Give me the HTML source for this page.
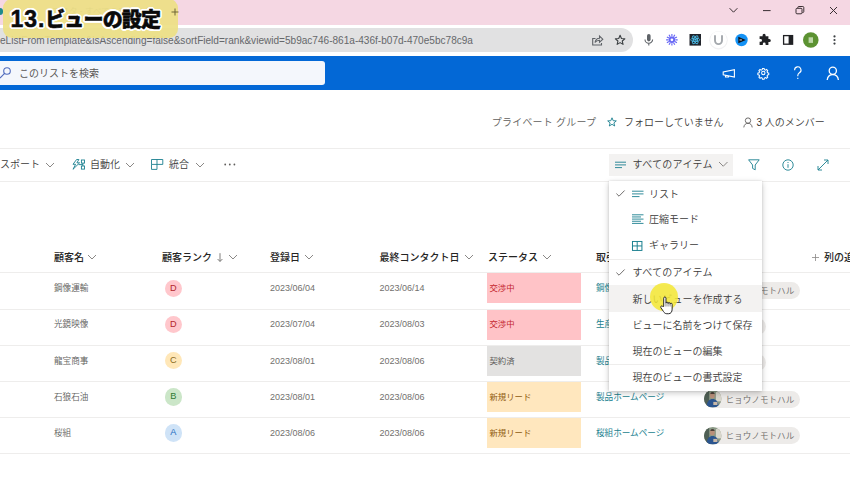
<!DOCTYPE html>
<html lang="ja">
<head>
<meta charset="utf-8">
<title>13.ビューの設定</title>
<style>
*{box-sizing:border-box;margin:0;padding:0}
html,body{width:850px;height:478px;overflow:hidden;background:#fff}
body{font-family:"Liberation Sans","Noto Sans CJK JP",sans-serif;position:relative;color:#323130}
.abs{position:absolute}
.t{position:absolute;white-space:nowrap;line-height:16px;height:16px}
svg{position:absolute;overflow:visible}
#tabstrip{left:0;top:0;width:850px;height:24.6px;background:#f5d7e3}
#url{left:-20px;top:28px;width:653px;height:24px;border-radius:12px;background:#e1e1e2}
#bluebar{left:0;top:55.5px;width:850px;height:34.5px;background:#0368d6}
#search{left:-5px;top:61px;width:330px;height:24px;border-radius:3px;background:#f4f7fc}
.hl{position:absolute;height:1px;background:#eeedec}
.hd{font-size:10px;font-weight:500;color:#252423}
.bd{font-size:8.6px;color:#605e5c;font-weight:350}
.dt{font-size:9px;color:#72706e}
.lk{font-size:8.6px;color:#1a7f8f}
.st{position:absolute;left:487px;width:94px;height:30px}
.stt{font-size:8.4px}
.rk{position:absolute;width:17.6px;height:17.6px;border-radius:50%;font-size:9.2px;text-align:center;line-height:17.6px}
.pill{position:absolute;height:17px;border-radius:8.5px;background:#edebe9}
.pt{font-size:8.6px;color:#6b6967;font-weight:350}
.mi{font-size:10px;color:#3b3a39;font-weight:350}
</style>
</head>
<body>
<div id="tabstrip" class="abs"></div>
<div id="url" class="abs"></div>
<div class="t " style="left:0px;top:32.6px;font-size:10.07px;color:#66686b;">eListFromTemplate&amp;isAscending=false&amp;sortField=rank&amp;viewid=5b9ac746-861a-436f-b07d-470e5bc78c9a</div>
<div id="bluebar" class="abs"></div>
<div id="search" class="abs"></div>
<div class="t " style="left:19px;top:66.1px;font-size:10px;color:#5a5856">このリストを検索</div>
<svg style="left:0;top:66px" width="12" height="14" viewBox="0 0 12 14"><circle cx="7" cy="5" r="3.3" fill="none" stroke="#4f6bbd" stroke-width="1.1"/><path d="M4.6 7.4 L0 12" stroke="#4f6bbd" stroke-width="1.1"/></svg>
<svg style="left:0;top:0" width="850" height="25" viewBox="0 0 850 25" fill="none" stroke="#3a2f33" stroke-width="1"><path d="M729.6 8.2 L733.5 12.2 L737.4 8.2"/><path d="M763 10.6 H770.6"/><rect x="796" y="8.3" width="6" height="5.5" rx="1"/><path d="M797.8 8 V7.5 a1 1 0 0 1 1 -1 H802.8 a1 1 0 0 1 1 1 V11.5 a1 1 0 0 1 -1 1 H802.3"/><path d="M830 7 L837 14 M837 7 L830 14"/></svg>
<svg style="left:0;top:25px" width="850" height="30" viewBox="0 25 850 30">
<g fill="none" stroke="#5f6368" stroke-width="1.1">
<path d="M595.5 38.5 H592.7 V45 H601.5 V43"/><path d="M595 42.5 C595.5 39.5 597.5 38.2 599.5 38.2 V36 L602.8 39.2 L599.5 42.3 V40.2 C597.5 40.2 596 41 595 42.5 Z"/>
<path d="M620.10 35.30 L621.45 38.44 L624.86 38.75 L622.29 41.01 L623.04 44.35 L620.10 42.60 L617.16 44.35 L617.91 41.01 L615.34 38.75 L618.75 38.44 Z" stroke="#3c4043" stroke-width="1.1" stroke-linejoin="round"/>
</g>
<g>
<rect x="647" y="34" width="3.6" height="7.4" rx="1.8" fill="#5f6368"/><path d="M645 39.5 a3.8 3.8 0 0 0 7.6 0 M648.8 43.3 V45.6" fill="none" stroke="#5f6368" stroke-width="1.1"/>
</g>
<g stroke="#6868f5" fill="none"><circle cx="671.9" cy="39.8" r="2.3" stroke-width="1.9"/><path d="M675.30 39.80 L677.70 39.80 M674.84 41.50 L676.92 42.70 M673.60 42.74 L674.80 44.82 M671.90 43.20 L671.90 45.60 M670.20 42.74 L669.00 44.82 M668.96 41.50 L666.88 42.70 M668.50 39.80 L666.10 39.80 M668.96 38.10 L666.88 36.90 M670.20 36.86 L669.00 34.78 M671.90 36.40 L671.90 34.00 M673.60 36.86 L674.80 34.78 M674.84 38.10 L676.92 36.90" stroke-width="1.15"/></g>
<rect x="689.5" y="34" width="11.5" height="11.6" fill="#20232a"/>
<g fill="none" stroke="#4cc3f0" stroke-width="0.8"><ellipse cx="695.2" cy="39.8" rx="4.6" ry="1.8"/><ellipse cx="695.2" cy="39.8" rx="4.6" ry="1.8" transform="rotate(60 695.2 39.8)"/><ellipse cx="695.2" cy="39.8" rx="4.6" ry="1.8" transform="rotate(120 695.2 39.8)"/></g><circle cx="695.2" cy="39.8" r="1" fill="#4cc3f0"/>
<circle cx="718.5" cy="40.2" r="9.2" fill="#f1f1f3"/><circle cx="718.5" cy="39.8" r="8.4" fill="#fff"/>
<path d="M715 35.2 V40.6 a3.5 3.5 0 0 0 7 0 V35.2" fill="none" stroke="#a4a8ad" stroke-width="1.9"/>
<circle cx="741.5" cy="40" r="6.2" fill="#1492f5"/><path d="M738.3 36.8 L745.8 40 L738.3 43.2 Z" fill="#10131a"/><rect x="739.5" y="39" width="2.4" height="1.8" fill="#7b8794"/>
<path d="M762.6 35.2 a1.5 1.5 0 0 1 3 0 V36.3 H768.4 V39 H769.3 a1.5 1.5 0 0 1 0 3 H768.4 V45 H765.6 V44 a1.4 1.4 0 0 0 -2.8 0 V45 H759.6 V41.8 H760.6 a1.4 1.4 0 0 0 0 -2.8 H759.6 V36.3 H762.6 Z" fill="#202124"/>
<rect x="783.6" y="35.6" width="9" height="8.6" fill="none" stroke="#202124" stroke-width="1.3"/><rect x="788.6" y="35.6" width="4" height="8.6" fill="#202124"/>
<circle cx="810.8" cy="40" r="7.8" fill="#5c9232"/>
<rect x="808.6" y="37.3" width="4.4" height="5.6" fill="#cfe3bd" opacity="0.85"/>
<circle cx="834.5" cy="36.4" r="1.1" fill="#3c4043"/><circle cx="834.5" cy="40" r="1.1" fill="#3c4043"/><circle cx="834.5" cy="43.6" r="1.1" fill="#3c4043"/>
</svg>
<svg style="left:0;top:55px" width="850" height="35" viewBox="0 55 850 35" fill="none" stroke="#fff" stroke-width="1.1">
<path d="M723.2 72 V74.8 L734.4 77 V69.6 Z"/><path d="M725.5 75.3 V77 H728.5 V75.9"/>
<g transform="translate(763.3 73) scale(0.8) translate(-763.3 -73)" stroke-width="1.3"><circle cx="763.3" cy="73" r="2.1"/>
<path d="M762.3 67.3 h2 l0.4 1.5 l1.3 0.6 l1.4 -0.8 l1.4 1.4 l-0.8 1.4 l0.6 1.3 l1.5 0.4 v2 l-1.5 0.4 l-0.6 1.3 l0.8 1.4 l-1.4 1.4 l-1.4 -0.8 l-1.3 0.6 l-0.4 1.5 h-2 l-0.4 -1.5 l-1.3 -0.6 l-1.4 0.8 l-1.4 -1.4 l0.8 -1.4 l-0.6 -1.3 l-1.5 -0.4 v-2 l1.5 -0.4 l0.6 -1.3 l-0.8 -1.4 l1.4 -1.4 l1.4 0.8 l1.3 -0.6 z"/></g>
<path d="M794.6 70.2 a3.2 3.2 0 1 1 4.8 2.6 c-1.2 0.8 -1.6 1.4 -1.6 2.8 v0.6"/><path d="M797.8 77.8 v1.2"/>
<circle cx="832.8" cy="70.8" r="3.6" stroke-width="1.3"/><path d="M827.2 80 c0.4 -3.6 2.8 -5.4 5.6 -5.4 s5.2 1.8 5.6 5.4" stroke-width="1.3"/>
</svg>
<div class="t " style="left:491.8px;top:115.2px;font-size:10px;color:#605e5c;font-weight:350;letter-spacing:0.2px">プライベート グループ</div>
<svg style="left:607px;top:117px" width="10" height="10" viewBox="0 0 10 10"><path d="M5 0.8 L6.2 3.7 L9.3 3.9 L6.9 5.9 L7.7 9 L5 7.3 L2.3 9 L3.1 5.9 L0.7 3.9 L3.8 3.7 Z" fill="none" stroke="#1a7f8f" stroke-width="0.9"/></svg>
<div class="t " style="left:624px;top:115.2px;font-size:10px;color:#3b3a39;font-weight:350">フォローしていません</div>
<svg style="left:743px;top:117px" width="10" height="11" viewBox="0 0 10 11" fill="none" stroke="#605e5c" stroke-width="0.9"><circle cx="5" cy="3.6" r="2.7"/><path d="M0.8 10.4 c0.3 -2.8 2 -4.1 4.2 -4.1 s3.9 1.3 4.2 4.1"/></svg>
<div class="t " style="left:756.5px;top:115.2px;font-size:10px;color:#3b3a39;font-weight:350">3 人のメンバー</div>
<div class="hl" style="left:0;top:148px;width:850px"></div>
<div class="hl" style="left:0;top:181px;width:850px"></div>
<div class="t mi" style="left:0px;top:157.1px;">スポート</div>
<svg style="left:46px;top:162.5px" width="8" height="4.0" viewBox="0 0 8 4.0"><path d="M0 0 L4.0 4.0 L8 0" fill="none" stroke="#8a8886" stroke-width="1"/></svg>
<svg style="left:71.5px;top:158.6px" width="13" height="11" viewBox="0 0 13 11" fill="none" stroke="#1a7f8f" stroke-width="0.9">
<path d="M4.6 0.5 L1 5.3 H3.6 L1 10.3 L7.6 3.8 H4.9 L6.9 0.5 Z"/><rect x="9.4" y="1" width="3.1" height="3.1"/><rect x="9.4" y="7" width="3.1" height="3.1"/><path d="M6.6 5.6 H10.9 M10.9 4.1 V7"/></svg>
<div class="t mi" style="left:90px;top:157.1px;">自動化</div>
<svg style="left:126px;top:162.5px" width="8" height="4.0" viewBox="0 0 8 4.0"><path d="M0 0 L4.0 4.0 L8 0" fill="none" stroke="#8a8886" stroke-width="1"/></svg>
<svg style="left:151px;top:158.8px" width="12.4" height="11" viewBox="0 0 12.4 11" fill="none" stroke="#1a7f8f" stroke-width="0.9">
<path d="M0.5 0.5 H11.8 V5.4 H0.5 Z M6 0.5 V10.4 M0.5 5.4 V10.4 H6"/></svg>
<div class="t mi" style="left:169px;top:157.1px;">統合</div>
<svg style="left:195.5px;top:162.5px" width="8" height="4.0" viewBox="0 0 8 4.0"><path d="M0 0 L4.0 4.0 L8 0" fill="none" stroke="#8a8886" stroke-width="1"/></svg>
<svg style="left:224px;top:163px" width="12" height="3" viewBox="0 0 12 3" fill="#605e5c"><circle cx="1.2" cy="1.5" r="0.9"/><circle cx="5.8" cy="1.5" r="0.9"/><circle cx="10.4" cy="1.5" r="0.9"/></svg>
<div class="abs" style="left:609px;top:154px;width:124px;height:21.5px;background:#f3f2f1"></div>
<svg style="left:615px;top:160.5px" width="12" height="8" viewBox="0 0 12 8" stroke="#1a7f8f" stroke-width="0.9"><path d="M0 1.2 H11 M0 3.9 H11 M0 6.6 H7"/></svg>
<div class="t mi" style="left:632.6px;top:157.1px;letter-spacing:0.28px">すべてのアイテム</div>
<svg style="left:718.5px;top:162.375px" width="8.5" height="4.25" viewBox="0 0 8.5 4.25"><path d="M0 0 L4.25 4.25 L8.5 0" fill="none" stroke="#8a8886" stroke-width="1"/></svg>
<svg style="left:748px;top:159px" width="12" height="12" viewBox="0 0 12 12" fill="none" stroke="#1a7f8f" stroke-width="0.9"><path d="M0.6 0.8 H11.2 L7.2 6 V10.8 L4.6 9.4 V6 Z"/></svg>
<svg style="left:782px;top:158.5px" width="12" height="12" viewBox="0 0 12 12" fill="none" stroke="#1a7f8f" stroke-width="0.9"><circle cx="6" cy="6" r="5.2"/><path d="M6 5.2 V8.8 M6 3 V4"/></svg>
<svg style="left:817px;top:158.5px" width="12" height="12" viewBox="0 0 12 12" fill="none" stroke="#1a7f8f" stroke-width="0.9"><path d="M1 11 L11 1 M7 1 H11 V5 M1 7 V11 H5"/></svg>
<div class="t hd" style="left:54px;top:249.6px;">顧客名</div>
<svg style="left:88px;top:255.0px" width="8" height="4.0" viewBox="0 0 8 4.0"><path d="M0 0 L4.0 4.0 L8 0" fill="none" stroke="#8a8886" stroke-width="1"/></svg>
<div class="t hd" style="left:162px;top:249.6px;">顧客ランク</div>
<svg style="left:217px;top:253px" width="6" height="9" viewBox="0 0 6 9"><path d="M3 0.2 V8.3 M0.6 6 L3 8.5 L5.4 6" fill="none" stroke="#605e5c" stroke-width="0.8"/></svg>
<svg style="left:228.7px;top:255.0px" width="8" height="4.0" viewBox="0 0 8 4.0"><path d="M0 0 L4.0 4.0 L8 0" fill="none" stroke="#8a8886" stroke-width="1"/></svg>
<div class="t hd" style="left:270px;top:249.6px;">登録日</div>
<svg style="left:305px;top:255.0px" width="8" height="4.0" viewBox="0 0 8 4.0"><path d="M0 0 L4.0 4.0 L8 0" fill="none" stroke="#8a8886" stroke-width="1"/></svg>
<div class="t hd" style="left:379.5px;top:249.6px;">最終コンタクト日</div>
<svg style="left:464.8px;top:255.0px" width="8" height="4.0" viewBox="0 0 8 4.0"><path d="M0 0 L4.0 4.0 L8 0" fill="none" stroke="#8a8886" stroke-width="1"/></svg>
<div class="t hd" style="left:488px;top:249.6px;">ステータス</div>
<svg style="left:542.8px;top:255.0px" width="8" height="4.0" viewBox="0 0 8 4.0"><path d="M0 0 L4.0 4.0 L8 0" fill="none" stroke="#8a8886" stroke-width="1"/></svg>
<div class="t hd" style="left:596px;top:249.6px;">取引</div>
<svg style="left:812px;top:253.5px" width="7" height="7" viewBox="0 0 7 7"><path d="M3.5 0 V7 M0 3.5 H7" stroke="#8a8886" stroke-width="0.8" fill="none"/></svg>
<div class="t hd" style="left:824px;top:249.6px;">列の追加</div>
<div class="hl" style="left:0;top:272.3px;width:850px"></div>
<div class="t bd" style="left:54px;top:280.2px;">鋼像運輸</div>
<div class="rk" style="left:164.6px;top:279.5px;background:#ffc7cc;color:#b3262d">D</div>
<div class="t dt" style="left:270px;top:280.2px;">2023/06/04</div>
<div class="t dt" style="left:379.5px;top:280.2px;">2023/06/14</div>
<div class="st" style="top:273.3px;background:#ffc3c7"></div>
<div class="t stt" style="left:489.5px;top:280.2px;color:#c4262e">交渉中</div>
<div class="t lk" style="left:596px;top:280.2px;">鋼像</div>
<div class="pill" style="left:703.5px;top:282.1px;width:96.5px"></div>
<svg style="left:703.5px;top:281.9px" width="17.6" height="17.6" viewBox="0 0 17 17"><defs><clipPath id="c0"><circle cx="8.5" cy="8.5" r="8.5"/></clipPath></defs><g clip-path="url(#c0)"><rect width="17" height="17" fill="#8b9a86"/><rect x="0" y="0" width="5" height="17" fill="#4f5f55"/><rect x="11.5" y="2" width="5.5" height="9" fill="#d9d6cc"/><ellipse cx="8" cy="5.2" rx="2.4" ry="2.8" fill="#b98f7a"/><path d="M6 3.6 a2.4 2.4 0 0 1 4.4 0 Z" fill="#2a2422"/><path d="M2.5 17 C2.5 10.5 5.5 8.6 8.3 8.6 S14 10.5 14.5 17 Z" fill="#2b558f"/><rect x="9" y="11.5" width="4" height="3" fill="#c9b9a8"/></g></svg>
<div class="t pt" style="left:725.5px;top:283.2px;">ヒョウノモトハル</div>
<div class="hl" style="left:0;top:308.5px;width:850px"></div>
<div class="t bd" style="left:54px;top:316.4px;">光鏡映像</div>
<div class="rk" style="left:164.6px;top:315.7px;background:#ffc7cc;color:#b3262d">D</div>
<div class="t dt" style="left:270px;top:316.4px;">2023/07/04</div>
<div class="t dt" style="left:379.5px;top:316.4px;">2023/08/03</div>
<div class="st" style="top:309.5px;background:#ffc3c7"></div>
<div class="t stt" style="left:489.5px;top:316.4px;color:#c4262e">交渉中</div>
<div class="t lk" style="left:596px;top:316.4px;">生産</div>
<div class="pill" style="left:703.5px;top:318.3px;width:62px"></div>
<svg style="left:703.5px;top:318.1px" width="17.6" height="17.6" viewBox="0 0 17 17"><defs><clipPath id="c1"><circle cx="8.5" cy="8.5" r="8.5"/></clipPath></defs><g clip-path="url(#c1)"><rect width="17" height="17" fill="#8b9a86"/><rect x="0" y="0" width="5" height="17" fill="#4f5f55"/><rect x="11.5" y="2" width="5.5" height="9" fill="#d9d6cc"/><ellipse cx="8" cy="5.2" rx="2.4" ry="2.8" fill="#b98f7a"/><path d="M6 3.6 a2.4 2.4 0 0 1 4.4 0 Z" fill="#2a2422"/><path d="M2.5 17 C2.5 10.5 5.5 8.6 8.3 8.6 S14 10.5 14.5 17 Z" fill="#2b558f"/><rect x="9" y="11.5" width="4" height="3" fill="#c9b9a8"/></g></svg>
<div class="hl" style="left:0;top:344.6px;width:850px"></div>
<div class="t bd" style="left:54px;top:352.5px;">龍宝商事</div>
<div class="rk" style="left:164.6px;top:351.8px;background:#ffe7b8;color:#8a6a1c">C</div>
<div class="t dt" style="left:270px;top:352.5px;">2023/08/01</div>
<div class="t dt" style="left:379.5px;top:352.5px;">2023/08/06</div>
<div class="st" style="top:345.6px;background:#e3e2e1"></div>
<div class="t stt" style="left:489.5px;top:352.5px;color:#605e5c">契約済</div>
<div class="t lk" style="left:596px;top:352.5px;">製品</div>
<div class="pill" style="left:703.5px;top:354.4px;width:62px"></div>
<svg style="left:703.5px;top:354.2px" width="17.6" height="17.6" viewBox="0 0 17 17"><defs><clipPath id="c2"><circle cx="8.5" cy="8.5" r="8.5"/></clipPath></defs><g clip-path="url(#c2)"><rect width="17" height="17" fill="#8b9a86"/><rect x="0" y="0" width="5" height="17" fill="#4f5f55"/><rect x="11.5" y="2" width="5.5" height="9" fill="#d9d6cc"/><ellipse cx="8" cy="5.2" rx="2.4" ry="2.8" fill="#b98f7a"/><path d="M6 3.6 a2.4 2.4 0 0 1 4.4 0 Z" fill="#2a2422"/><path d="M2.5 17 C2.5 10.5 5.5 8.6 8.3 8.6 S14 10.5 14.5 17 Z" fill="#2b558f"/><rect x="9" y="11.5" width="4" height="3" fill="#c9b9a8"/></g></svg>
<div class="hl" style="left:0;top:380.8px;width:850px"></div>
<div class="t bd" style="left:54px;top:388.7px;">石狼石油</div>
<div class="rk" style="left:164.6px;top:388.0px;background:#cbe6c8;color:#2f7a33">B</div>
<div class="t dt" style="left:270px;top:388.7px;">2023/08/01</div>
<div class="t dt" style="left:379.5px;top:388.7px;">2023/08/06</div>
<div class="st" style="top:381.8px;background:#ffe7be"></div>
<div class="t stt" style="left:489.5px;top:388.7px;color:#8f5a0e">新規リード</div>
<div class="t lk" style="left:596px;top:388.7px;">製品ホームページ</div>
<div class="pill" style="left:703.5px;top:390.6px;width:96.5px"></div>
<svg style="left:703.5px;top:390.4px" width="17.6" height="17.6" viewBox="0 0 17 17"><defs><clipPath id="c3"><circle cx="8.5" cy="8.5" r="8.5"/></clipPath></defs><g clip-path="url(#c3)"><rect width="17" height="17" fill="#8b9a86"/><rect x="0" y="0" width="5" height="17" fill="#4f5f55"/><rect x="11.5" y="2" width="5.5" height="9" fill="#d9d6cc"/><ellipse cx="8" cy="5.2" rx="2.4" ry="2.8" fill="#b98f7a"/><path d="M6 3.6 a2.4 2.4 0 0 1 4.4 0 Z" fill="#2a2422"/><path d="M2.5 17 C2.5 10.5 5.5 8.6 8.3 8.6 S14 10.5 14.5 17 Z" fill="#2b558f"/><rect x="9" y="11.5" width="4" height="3" fill="#c9b9a8"/></g></svg>
<div class="t pt" style="left:725.5px;top:391.7px;">ヒョウノモトハル</div>
<div class="hl" style="left:0;top:416.9px;width:850px"></div>
<div class="t bd" style="left:54px;top:424.8px;">桜組</div>
<div class="rk" style="left:164.6px;top:424.1px;background:#cfe3f7;color:#1f6fc0">A</div>
<div class="t dt" style="left:270px;top:424.8px;">2023/08/06</div>
<div class="t dt" style="left:379.5px;top:424.8px;">2023/08/06</div>
<div class="st" style="top:417.9px;background:#ffe7be"></div>
<div class="t stt" style="left:489.5px;top:424.8px;color:#8f5a0e">新規リード</div>
<div class="t lk" style="left:596px;top:424.8px;">桜組ホームページ</div>
<div class="pill" style="left:703.5px;top:426.7px;width:96.5px"></div>
<svg style="left:703.5px;top:426.5px" width="17.6" height="17.6" viewBox="0 0 17 17"><defs><clipPath id="c4"><circle cx="8.5" cy="8.5" r="8.5"/></clipPath></defs><g clip-path="url(#c4)"><rect width="17" height="17" fill="#8b9a86"/><rect x="0" y="0" width="5" height="17" fill="#4f5f55"/><rect x="11.5" y="2" width="5.5" height="9" fill="#d9d6cc"/><ellipse cx="8" cy="5.2" rx="2.4" ry="2.8" fill="#b98f7a"/><path d="M6 3.6 a2.4 2.4 0 0 1 4.4 0 Z" fill="#2a2422"/><path d="M2.5 17 C2.5 10.5 5.5 8.6 8.3 8.6 S14 10.5 14.5 17 Z" fill="#2b558f"/><rect x="9" y="11.5" width="4" height="3" fill="#c9b9a8"/></g></svg>
<div class="t pt" style="left:725.5px;top:427.8px;">ヒョウノモトハル</div>
<div class="hl" style="left:0;top:453.1px;width:850px"></div>
<div class="abs" style="left:609px;top:181px;width:153px;height:209.5px;background:#fff;box-shadow:0 2px 6px rgba(0,0,0,.22),0 0 2px rgba(0,0,0,.12)"></div>
<div class="abs" style="left:609px;top:284.8px;width:153px;height:27px;background:#f3f2f1"></div>
<div class="hl" style="left:609px;top:259px;width:153px"></div>
<div class="hl" style="left:609px;top:364px;width:153px"></div>
<svg style="left:615.5px;top:190.0px" width="9" height="7" viewBox="0 0 9 7"><path d="M0.4 3.6 L3 6.2 L8.6 0.5" fill="none" stroke="#605e5c" stroke-width="0.9"/></svg>
<svg style="left:631.5px;top:190px" width="12" height="8" viewBox="0 0 12 8" stroke="#1a7f8f" stroke-width="0.9"><path d="M0 1.2 H11.5 M0 3.9 H11.5 M0 6.6 H7.5"/></svg>
<div class="t mi" style="left:649px;top:186.6px;">リスト</div>
<svg style="left:631.5px;top:214.3px" width="12" height="11" viewBox="0 0 12 11" stroke="#1a7f8f" stroke-width="0.9"><path d="M0 0.8 H11.5 M0 2.95 H9 M0 5.1 H11.5 M0 7.25 H9 M0 9.4 H11.5"/></svg>
<div class="t mi" style="left:649px;top:212.1px;">圧縮モード</div>
<svg style="left:631.8px;top:240.6px" width="10.4" height="9.9" viewBox="0 0 11 11" preserveAspectRatio="none" fill="none" stroke="#1a7f8f" stroke-width="1.05"><rect x="0.5" y="0.5" width="10" height="10"/><path d="M5.5 0.5 V10.5 M0.5 5.5 H10.5"/></svg>
<div class="t mi" style="left:649px;top:238.1px;">ギャラリー</div>
<svg style="left:615.5px;top:268.5px" width="9" height="7" viewBox="0 0 9 7"><path d="M0.4 3.6 L3 6.2 L8.6 0.5" fill="none" stroke="#605e5c" stroke-width="0.9"/></svg>
<div class="t mi" style="left:632.6px;top:265.1px;letter-spacing:0.28px">すべてのアイテム</div>
<div class="t mi" style="left:632.5px;top:291.9px;">新しいビューを作成する</div>
<div class="t mi" style="left:632.5px;top:318.1px;">ビューに名前をつけて保存</div>
<div class="t mi" style="left:632.5px;top:344.1px;">現在のビューの編集</div>
<div class="t mi" style="left:632.5px;top:370.1px;">現在のビューの書式設定</div>
<div class="abs" style="left:650.4px;top:283.1px;width:28px;height:28px;border-radius:50%;background:rgba(243,232,50,.85);filter:blur(0.6px)"></div>
<svg style="left:660.4px;top:295.6px" width="13.4" height="18.6" viewBox="0 0 13 17" preserveAspectRatio="none"><path d="M3.6 9.6 V2 a1.1 1.1 0 0 1 2.2 0 V6.6 a1 1 0 0 1 2 0 V7 a1 1 0 0 1 2 0 V7.6 a1 1 0 0 1 2 0 V12 c0 2.6 -1.4 4.2 -3.4 4.2 H6.6 c-1.6 0 -2.4 -0.8 -3.2 -2 L0.8 10.6 c-0.6 -1 0.6 -2 1.6 -1.2 Z" fill="#fff" stroke="#222" stroke-width="0.9"/><path d="M5.8 6.8 V9.6 M7.8 7.2 V9.6 M9.8 7.8 V9.6" stroke="#444" stroke-width="0.6" fill="none"/></svg>
<div class="abs" style="left:-3px;top:7.5px;width:6px;height:7px;border-radius:3px;background:#1f8a8c"></div>
<div class="t" style="left:52px;top:3px;font-size:8.5px;color:#8a7a80">マスタ - すべてのアイテム</div>
<div class="abs" style="left:3px;top:-1px;width:174.5px;height:38.5px;border-radius:9px;background:rgba(237,224,132,.92)"></div>
<svg style="left:170.5px;top:8px" width="8" height="8" viewBox="0 0 8 8"><path d="M4 0.5 V7.5 M0.5 4 H7.5" stroke="#6e6436" stroke-width="1" fill="none"/></svg>
<div class="t" style="left:10.5px;top:5px;height:28px;line-height:28px;color:#0a0a0a;-webkit-text-stroke:0.5px #0a0a0a;text-shadow:1.20px 0.00px 0 #fff,1.11px 0.46px 0 #fff,0.85px 0.85px 0 #fff,0.46px 1.11px 0 #fff,0.00px 1.20px 0 #fff,-0.46px 1.11px 0 #fff,-0.85px 0.85px 0 #fff,-1.11px 0.46px 0 #fff,-1.20px 0.00px 0 #fff,-1.11px -0.46px 0 #fff,-0.85px -0.85px 0 #fff,-0.46px -1.11px 0 #fff,-0.00px -1.20px 0 #fff,0.46px -1.11px 0 #fff,0.85px -0.85px 0 #fff,1.11px -0.46px 0 #fff,2.00px 0.00px 0 #fff,1.85px 0.77px 0 #fff,1.41px 1.41px 0 #fff,0.77px 1.85px 0 #fff,0.00px 2.00px 0 #fff,-0.77px 1.85px 0 #fff,-1.41px 1.41px 0 #fff,-1.85px 0.77px 0 #fff,-2.00px 0.00px 0 #fff,-1.85px -0.77px 0 #fff,-1.41px -1.41px 0 #fff,-0.77px -1.85px 0 #fff,-0.00px -2.00px 0 #fff,0.77px -1.85px 0 #fff,1.41px -1.41px 0 #fff,1.85px -0.77px 0 #fff"><span style="font-size:23px;font-weight:bold;letter-spacing:0.9px">13.</span><span style="font-size:20px;font-weight:900;letter-spacing:-0.85px">ビューの設定</span></div>
</body>
</html>
